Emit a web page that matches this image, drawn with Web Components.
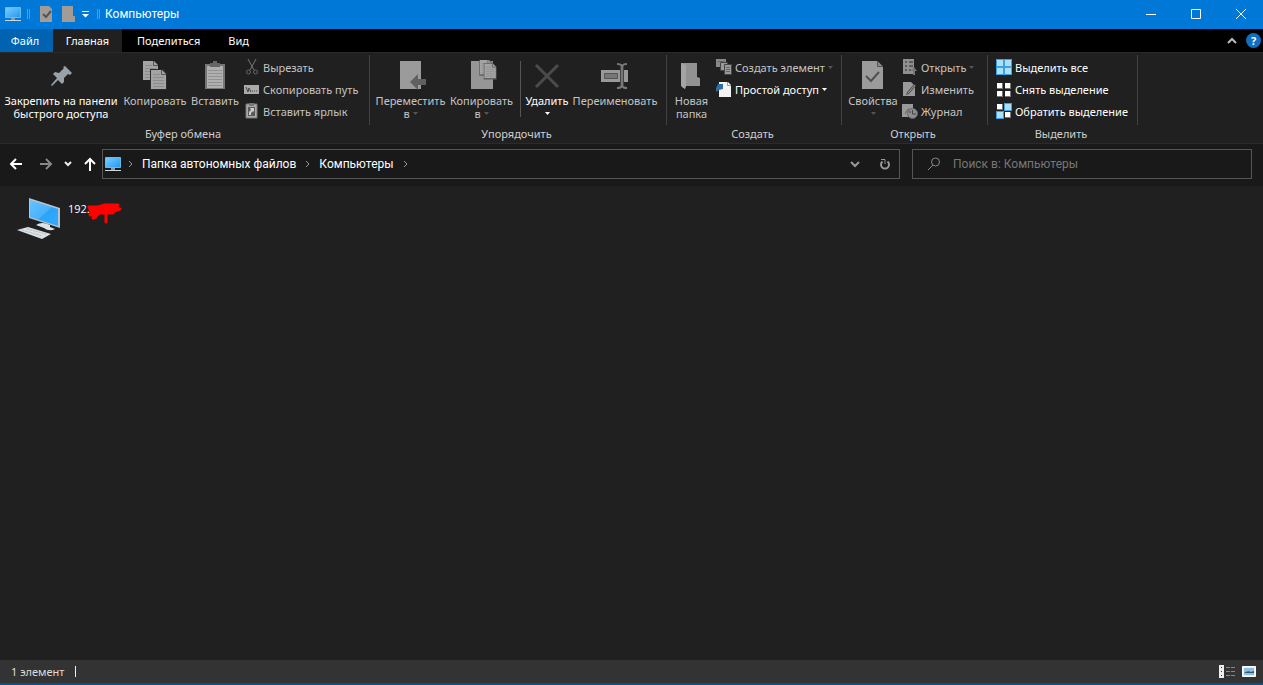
<!DOCTYPE html>
<html lang="ru">
<head>
<meta charset="utf-8">
<title>Компьютеры</title>
<style>
html,body{height:100%}
body{margin:0;background:#202020;color:#fff;font:11px/13px "Noto Sans","Open Sans",sans-serif;--shell:Roboto,"Open Sans",sans-serif}
</style>
</head>
<body>
<explorer-window>
  <title-bar slot="title">Компьютеры</title-bar>
  <tab-strip slot="tabs">
    <ribbon-tab kind="file">Файл</ribbon-tab>
    <ribbon-tab kind="active">Главная</ribbon-tab>
    <ribbon-tab>Поделиться</ribbon-tab>
    <ribbon-tab>Вид</ribbon-tab>
  </tab-strip>
  <ribbon-bar slot="ribbon">
    <ribbon-group label="Буфер обмена" style="--w:370px">
      <big-button icon="pin" on style="--w:122px">Закрепить на панели<br>быстрого доступа</big-button>
      <big-button icon="copy" style="--w:66px">Копировать</big-button>
      <big-button icon="paste" style="--w:54px">Вставить</big-button>
      <small-list>
        <small-button icon="cut">Вырезать</small-button>
        <small-button icon="path">Скопировать путь</small-button>
        <small-button icon="shortcut">Вставить ярлык</small-button>
      </small-list>
    </ribbon-group>
    <ribbon-group label="Упорядочить" style="--w:297px;--start:4px">
      <big-button icon="move" drop style="--w:73px">Переместить<br>в</big-button>
      <big-button icon="copyto" drop style="--w:69px">Копировать<br>в</big-button>
      <group-divider></group-divider>
      <big-button icon="delete" on drop style="--w:46px">Удалить<br></big-button>
      <big-button icon="rename" style="--w:90px">Переименовать</big-button>
    </ribbon-group>
    <ribbon-group label="Создать" style="--w:175px;--start:2px">
      <big-button icon="folder" style="--w:45px">Новая<br>папка</big-button>
      <small-list>
        <small-button icon="newitem" drop>Создать элемент</small-button>
        <small-button icon="easy" on drop>Простой доступ</small-button>
      </small-list>
    </ribbon-group>
    <ribbon-group label="Открыть" style="--w:146px;--start:4px">
      <big-button icon="props" drop style="--w:54px">Свойства<br></big-button>
      <small-list>
        <small-button icon="open" drop>Открыть</small-button>
        <small-button icon="edit">Изменить</small-button>
        <small-button icon="history">Журнал</small-button>
      </small-list>
    </ribbon-group>
    <ribbon-group label="Выделить" style="--w:150px;--start:6px">
      <small-list>
        <small-button icon="selall" on>Выделить все</small-button>
        <small-button icon="selnone" on>Снять выделение</small-button>
        <small-button icon="selinv" on>Обратить выделение</small-button>
      </small-list>
    </ribbon-group>
  </ribbon-bar>
  <nav-bar slot="nav"></nav-bar>
  <file-item>192.</file-item>
  <status-bar slot="status">1 элемент</status-bar>
</explorer-window>

<script>
const svg=(w,h,body)=>`<svg width="${w}" height="${h}" viewBox="0 0 ${w} ${h}" fill="none" aria-hidden="true">${body}</svg>`;
const page=(x,y)=>`<g transform="translate(${x} ${y})"><path d="M0 0h11l4 4v15H0z" fill="#a4a4a4"/><path d="M10.500 0v4.500H15" stroke="#555"/><path d="M2 4.500h7M2 7.500h11M2 10.500h11M2 13.500h11M2 16.500h11" stroke="#8c8c8c"/></g>`;
const cell=(x,y,sel)=>sel?`<path d="M${x} ${y}h8v8h-8z" fill="#3f9fdf"/><path d="M${x+1} ${y+1}h6v6h-6z" fill="#a9e0fc"/>`:`<path d="M${x+1} ${y+1}h6v6h-6z" fill="#777"/><path d="M${x+1} ${y+1}h5v5h-5z" fill="#fff"/>`;
const monitor=`<defs><linearGradient id="m" x2="1" y2="1"><stop stop-color="#7cceff"/><stop offset="1" stop-color="#1e98f0"/></linearGradient></defs><path d="M.5.5h15v10H.5z" fill="url(#m)" stroke="#6bb9e8"/><path d="M6 11h4v2H6z" fill="#8f9ba5"/><path d="M0 13.500h16" stroke="#cfd8de"/>`;
const ICONS={
 pin:svg(32,32,'<path d="M20 6 27 13l-2 2-2-1-4 4 0 4-2 2-4-4-6 6-1-1 6-7-4-4 2-2 4 1 5-5-1-1z" fill="#98a0aa"/>'),
 copy:svg(32,32,page(4,1)+'<path d="M11 9h13l4 4v17H11z" fill="#2c2c2c"/>'+page(12,10)),
 paste:svg(32,32,'<path d="M6 4h20v25H6z" fill="#757575"/><path d="M8 6h16v22H8z" fill="#b0b0b0"/><path d="M9 10.500h14M9 13.500h14M9 16.500h14M9 19.500h14M9 22.500h14M9 25.500h14" stroke="#919191"/><path d="M11 3h3V1h4v2h3v4H11z" fill="#666"/>'),
 move:svg(32,32,'<path d="M5 1h21v28H5z" fill="#9b9b9b"/><path d="M23 14v5h8v6h-8v5l-8-8z" fill="#606060"/>'),
 copyto:svg(32,32,'<path d="M5 1h22v28H5z" fill="#969696"/><g transform="translate(14 0) scale(.75)"><path d="M-1-1h13l5 5v17H-1z" fill="#606060"/>'+page(0,0)+'<path d="M5 4h12l5 5v17H5z" fill="#606060"/>'+page(6,5)+'</g>'),
 delete:svg(32,32,'<path d="m5 5 22 22M27 5 5 27" stroke="#4b4b4b" stroke-width="3"/>'),
 rename:svg(32,32,'<path d="M2 10h27v12H2z" fill="#999"/><path d="M5.500 13.500h13v5h-13z" fill="#777" stroke="#555"/><path d="M23 5v22" stroke="#444" stroke-width="4"/><path d="M18 4q4 0 5 2 1-2 5-2M23 5v22M18 28q4 0 5-2 1 2 5 2" stroke="#777" stroke-width="2"/>'),
 folder:svg(32,32,'<path d="M5 3h16v14l3 1v8H10l-1 3-3-2z" fill="#929292"/><path d="m5 3 5 2v20l-1 4-4-3z" fill="#a4a4a4"/>'),
 props:svg(32,32,'<path d="M5 1h15l6 6v22H5z" fill="#9b9b9b"/><path d="M20.500 1v5.500H26" fill="#888" stroke="#555"/><path d="m9 16 5 5 8-9" stroke="#505050" stroke-width="2"/>'),
 cut:svg(16,16,'<path d="m4 0 6 11M12 0 6 11" stroke="#777"/><circle cx="4.500" cy="13" r="2" stroke="#666"/><circle cx="11.500" cy="13" r="2" stroke="#666"/>'),
 path:svg(16,16,'<path d="M0 4h15v9H0z" fill="#aaa"/><path d="m2 6 2 5 1-4 2 4M8 10h1M10 10h1M12 10h1" stroke="#444"/>'),
 shortcut:svg(16,16,'<path d="M2 1h11v14H2z" fill="#aaa" stroke="#777"/><path d="M5 0h5v3H5z" fill="#777"/><path d="M4 4h7v9H4z" fill="#5a5a5a"/><path d="M5 12V9l2-2-1-2h4v4l-1-1-2 2v2z" fill="#ccc"/>'),
 newitem:svg(16,16,'<path d="M0 0h10v8H0z" fill="#888"/><path d="M4.500 3.500h7v8h-7z" fill="#999" stroke="#444"/><path d="M8.500 5.500h7v10h-7z" fill="#999" stroke="#444"/><path d="M2 2.500h6M10 8.500h4M10 10.500h4M10 12.500h4" stroke="#666"/>'),
 easy:svg(16,16,'<path d="M3 1h9l3 3v12H3z" fill="#f3f3f3"/><path d="M11.500 1v3.500H15" stroke="#999"/><path d="M2 3h5v5L3 9l-3 2V7z" fill="#2d6da3"/>'),
 open:svg(16,16,'<path d="M1 0h11v15H1z" fill="#909090"/><path d="M3 3h2M3 7h2M3 11h2M7 3h4M7 7h4M7 11h2" stroke="#5c5c5c" stroke-width="2"/><path d="m12 8 3 4h-2v4h-2v-4H9z" fill="#777"/>'),
 edit:svg(16,16,'<path d="M1 1h8l4 4v10H1z" fill="#9a9a9a"/><path d="m4 14 1-3 7-8 2 2-7 8z" fill="#555"/><path d="m6 12 7-8" stroke="#999"/>'),
 history:svg(16,16,'<path d="M0 1h11v13H0z" fill="#999"/><path d="m3 11 3-5 5 1" stroke="#666"/><circle cx="10.500" cy="10.500" r="5" fill="#8e8e8e" stroke="#666"/><path d="M10.500 7v4H14M7 9h2" stroke="#444"/>'),
 selall:svg(16,16,cell(0,0,1)+cell(8,0,1)+cell(0,8,1)+cell(8,8,1)),
 selnone:svg(16,16,cell(0,1)+cell(8,1)+cell(0,9)+cell(8,9)),
 selinv:svg(16,16,cell(0,0)+cell(8,0,1)+cell(0,8,1)+cell(8,8)),
 monitor:svg(16,14,monitor)
};
const ARROW='<svg class="arrow" width="5" height="3" viewBox="0 0 5 3" aria-hidden="true"><path d="M0 0h5L2.500 3z" fill="currentColor"/></svg>';
const RESET='button{appearance:none;border:0;margin:0;padding:0;background:none;color:inherit;font:inherit}svg{display:block;flex:none}';
const define=(name,render)=>customElements.define(name,class extends HTMLElement{
  constructor(){super();this.attachShadow({mode:'open'});}
  connectedCallback(){this.shadowRoot.innerHTML=render(this);}
});

define('explorer-window',()=>`<style>
:host{display:flex;flex-direction:column;min-height:100vh;background:#202020}
main{flex:1;padding:10px 16px}
</style><slot name="title"></slot><slot name="tabs"></slot><slot name="ribbon"></slot><slot name="nav"></slot><main><slot></slot></main><slot name="status"></slot>`);

define('title-bar',()=>`<style>${RESET}
:host{display:flex;align-items:center;box-sizing:border-box;height:29px;padding:0 0 2px 5px;background:#0078d7;font:12px/16px var(--shell)}
.bar{height:10px;border:solid #4b9fdf;border-width:0 1px;width:1px}
.quick{display:flex;align-items:center;gap:6px;margin:0 8px 0 6px}
.quick .bar{margin-right:2px}
.name{flex:1;padding-left:5px}
.win{width:45px;height:27px;display:grid;place-items:center}
</style>${ICONS.monitor}
<div class="quick"><span class="bar"></span>
<button aria-label="Свойства">${svg(16,16,'<path d="M2 0h9l3 3v13H2z" fill="#a29c98"/><path d="m5 8 3 3 5-6" stroke="#555" stroke-width="2"/>')}</button>
<button aria-label="Новая папка">${svg(16,16,'<path d="M2 0h11v10h2v6H2z" fill="#a29c98"/>')}</button>
<button aria-label="Настройка панели">${svg(7,8,'<path d="M0 1.500h7" stroke="#fff"/><path d="M0 4h7L3.500 7.500z" fill="#fff"/>')}</button></div>
<span class="bar"></span><span class="name"><slot></slot></span>
<button class="win" aria-label="Свернуть">${svg(10,10,'<path d="M0 5.500h10" stroke="#fff"/>')}</button>
<button class="win" aria-label="Развернуть">${svg(10,10,'<path d="M.5.5h9v9h-9z" stroke="#fff"/>')}</button>
<button class="win" aria-label="Закрыть">${svg(10,10,'<path d="m0 0 10 10M10 0 0 10" stroke="#fff"/>')}</button>`);

define('tab-strip',()=>`<style>${RESET}
:host{display:flex;background:#000;height:23px;padding-right:2px}
.end{margin-left:auto;display:flex;align-items:center;gap:9px}
.help{width:15px;height:15px;border-radius:50%;background:#0f6fc0;font-weight:700;text-align:center}
</style><slot></slot><div class="end"><button aria-label="Свернуть ленту">${svg(10,7,'<path d="m1 6 4-4 4 4" stroke="#bbb" stroke-width="2"/>')}</button><button class="help">?</button></div>`);

define('ribbon-tab',()=>`<style>${RESET}
:host{display:block}
button{height:23px;padding:0 13px 0 15px}
:host([kind=file]) button{background:#0063b1;width:53px;padding:0 3px 0 0}
:host([kind=active]) button{background:#202020;width:69px;padding:0}
</style><button><slot></slot></button>`);

define('ribbon-bar',()=>`<style>:host{display:flex;height:90px;background:#202020;border:solid #2b2b2b;border-width:1px 0}</style><slot></slot>`);

define('ribbon-group',e=>`<style>
:host{display:flex;flex-direction:column;box-sizing:border-box;width:var(--w);position:relative}
:host::after{content:"";position:absolute;right:0;top:2px;bottom:18px;border-right:1px solid #424242}
.body{display:flex;height:74px;padding-left:var(--start,0)}
.label{text-align:center;color:#cfcfcf;padding-right:4px}
</style><div class="body"><slot></slot></div><div class="label">${e.getAttribute('label')}</div>`);

define('big-button',e=>`<style>${RESET}
:host{display:block;width:var(--w);flex:none;color:#c4c4c4;--arrow:#555}
:host([on]){color:#fff;--arrow:#fff}
button{display:flex;flex-direction:column;align-items:center;width:100%;padding-top:7px;white-space:nowrap}
.text{margin-top:2px;text-align:center}
.arrow{display:inline-block;vertical-align:3px;margin-left:3px;color:var(--arrow)}
:host([icon=delete]) .arrow,:host([icon=props]) .arrow{margin-left:0}
</style><button>${ICONS[e.getAttribute('icon')]}<span class="text"><slot></slot>${e.hasAttribute('drop')?ARROW:''}</span></button>`);

define('small-list',()=>`<style>:host{display:flex;flex-direction:column;padding:3px 0 0 2px}</style><slot></slot>`);

define('small-button',e=>`<style>${RESET}
:host{display:block;color:#c4c4c4;--arrow:#555}
:host([on]){color:#fff;--arrow:#fff}
button{display:flex;align-items:center;gap:3px;height:22px;white-space:nowrap}
.arrow{color:var(--arrow)}
</style><button>${ICONS[e.getAttribute('icon')]}<slot></slot>${e.hasAttribute('drop')?ARROW:''}</button>`);

define('group-divider',()=>`<style>:host{display:block;width:1px;height:56px;margin:8px 3px 0 4px;background:#555}</style>`);

const CHEV=svg(5,8,'<path d="m1 1 3 3-3 3" stroke="#999"/>');
define('nav-bar',()=>`<style>${RESET}
:host{display:flex;align-items:center;height:42px;background:#191919;padding:0 11px 2px 9px;font:12px/16px var(--shell);box-sizing:border-box}
.go{display:flex;align-items:center;justify-content:space-between;width:87px;margin-right:6px}
.go button:nth-child(2){margin-left:4px}
.address{flex:1;display:flex;align-items:center;height:30px;box-sizing:border-box;border:1px solid #555;padding:0 8px 0 2px}
.address a{color:#fff;text-decoration:none;margin:0 9px}
.address .first{width:7px}
.end{margin-left:auto;display:flex;gap:19px;align-items:center}
.search{width:340px;height:30px;box-sizing:border-box;border:1px solid #555;margin-left:12px;display:flex;align-items:center;gap:12px;padding-left:14px}
input{flex:1;min-width:0;border:0;padding:0;background:none;color:#fff;font:inherit;outline:0}
input::placeholder{color:#777;opacity:1}
</style>
<div class="go">
<button aria-label="Назад">${svg(14,12,'<path d="M13 6H2M7 1 2 6l5 5" stroke="#fff" stroke-width="2"/>')}</button>
<button aria-label="Вперёд">${svg(14,12,'<path d="M1 6h11M7 1l5 5-5 5" stroke="#888" stroke-width="2"/>')}</button>
<button aria-label="Последние">${svg(8,6,'<path d="m1 1 3 3 3-3" stroke="#eee" stroke-width="2"/>')}</button>
<button aria-label="Вверх">${svg(12,14,'<path d="M6 14V2M1 7l5-5 5 5" stroke="#fff" stroke-width="2"/>')}</button>
</div>
<div class="address">${ICONS.monitor}<span class="first"></span>${CHEV}<a href="#files">Папка автономных файлов</a>${CHEV}<a href="#pcs">Компьютеры</a>${CHEV}
<div class="end"><button aria-label="История">${svg(10,7,'<path d="m1 1 4 4 4-4" stroke="#999" stroke-width="2"/>')}</button>
<button aria-label="Обновить">${svg(12,12,'<path d="M8.500 3.500a4 4 0 1 1-5 0" stroke="#999" stroke-width="2"/><path d="M2 1.500h4V6" stroke="#999" stroke-width="1"/>')}</button></div></div>
<label class="search">${svg(14,14,'<circle cx="8.500" cy="5" r="4" stroke="#888"/><path d="m6 8-5 5" stroke="#888"/>')}<input type="search" aria-label="Поиск" placeholder="Поиск в: Компьютеры"></label>`);

define('file-item',()=>`<style>
:host{display:flex;gap:6px;font:11px/16px "Open Sans","Noto Sans",sans-serif;width:190px}
.pc{display:block;flex:none}
.name{position:relative;padding-top:5px}
.mark{position:absolute;left:17px;top:5px}
</style><svg class="pc" width="46" height="46" viewBox="0 0 46 46" aria-hidden="true"><defs><linearGradient id="s" x2="1" y2="1"><stop stop-color="#69c2ff"/><stop offset=".5" stop-color="#49b1fb"/><stop offset=".55" stop-color="#2ba4f8"/><stop offset="1" stop-color="#34abff"/></linearGradient></defs><path d="m13 2 31 10v20L13 22z" fill="#b5c4cf"/><path d="m14 4 28 9v17L14 21z" fill="url(#s)"/><path d="M20 29q6-4 14 0v2l5 2q-6 3-11-1z" fill="#dfe3e6"/><path d="m1 34 11-3 23 7-9 5z" fill="#dce1e5"/><path d="m6 34 20 6M11 33l19 5" stroke="#b3b9be" stroke-dasharray="2 1"/></svg>
<span class="name"><slot></slot><svg class="mark" width="38" height="24" viewBox="0 0 38 24" fill="none" stroke="#f00" stroke-linecap="round" stroke-linejoin="round" aria-hidden="true"><path d="M4 6h9l7-2h13l-2 3 4 1-6 2-1 2H15l-3 2-7 0 1-3z" fill="#f00" stroke-width="3"/><path d="m10 14-2 3 3-1" stroke-width="3"/><path d="M21 10v11" stroke-width="3"/></svg></span>`);

define('status-bar',()=>`<style>${RESET}
:host{display:flex;align-items:center;height:23px;background:#333;border-bottom:2px solid #07508c;padding:0 7px 0 11px;color:#ddd;font-size:11px;line-height:16px}
.sep{width:1px;height:11px;background:#eee;margin-left:11px}
.view{margin-left:auto;display:flex;align-items:center;gap:7px}
</style><slot></slot><span class="sep"></span><div class="view">
<button aria-label="Таблица">${svg(16,13,'<path d="M0 0h5v13H0z" fill="#eee"/><path d="M2 2h1v1H2zM2 6h1v1H2zM2 10h1v1H2z" fill="#333"/><path d="M7 2.500h4M12 2.500h4M7 6.500h4M12 6.500h4M7 10.500h4M12 10.500h4" stroke="#888"/>')}</button>
<button aria-label="Крупные значки">${svg(14,11,'<path d="M.5.5h13v10H.5z" fill="#e8eef2" stroke="#fff"/><path d="M2 2h10v7H2z" fill="#8cc0de"/><path d="M2 7q4-3 7-1l3-1v2H2z" fill="#315b75"/>')}</button></div>`);
</script>
</body>
</html>
